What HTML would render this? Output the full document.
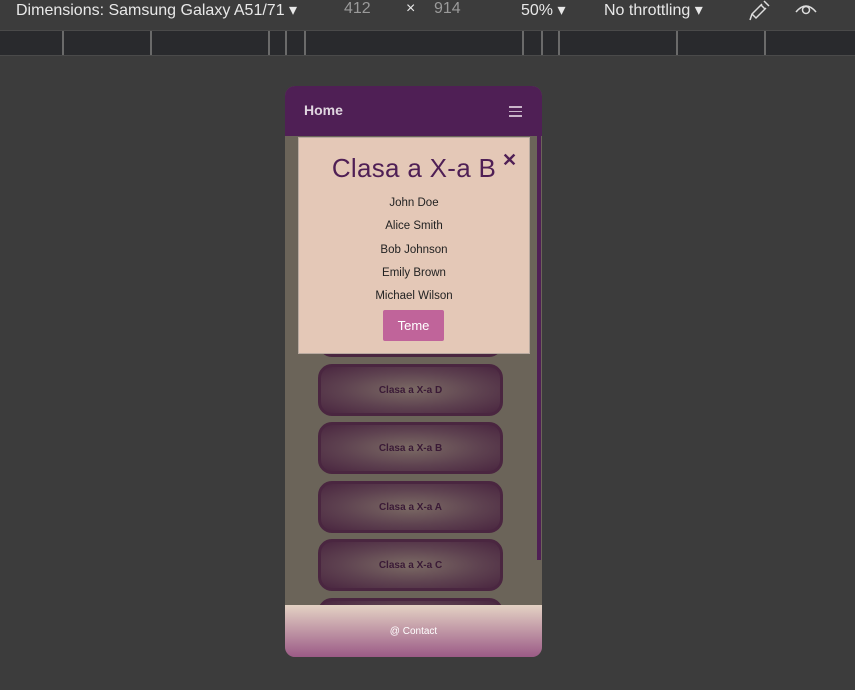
<!DOCTYPE html>
<html><head><style>
*{margin:0;padding:0;box-sizing:border-box}
body{width:855px;height:690px;background:#3c3c3c;font-family:"Liberation Sans",sans-serif;position:relative;overflow:hidden}
.tb{position:absolute;left:0;top:0;width:855px;height:30px;background:#3c3c3c;color:#e8e8e8;font-size:16px}
.tb span{position:absolute;top:0px;white-space:nowrap}
.rul{position:absolute;left:0;top:30px;width:855px;height:26px;background:#292a2d;border-top:1px solid #4a4a4a;border-bottom:1px solid #4a4a4a}
.rul i{position:absolute;top:0;width:2px;height:24px;background:#6a6a6a}
.ph{position:absolute;left:285px;top:86px;width:257px;height:571px;background:#6b6459;border-radius:10px;overflow:hidden}
.hd{position:absolute;left:0;top:0;width:257px;height:50px;background:#4f1f55}
.hd b{position:absolute;left:19px;top:16px;color:#e0d6e0;font-size:14px}
.bur{position:absolute;left:224px;top:20px;width:13px}
.bur i{display:block;height:1.5px;background:#c9b5c9;margin-bottom:3px}
.sb{position:absolute;left:252px;top:50px;width:4px;height:424px;background:#4f1f55}
.card{position:absolute;left:33px;width:185px;height:52px;border-radius:14px;border:3px solid #4a2640;background:radial-gradient(ellipse at center,#7b6a64 0%,#5e4250 55%,#4a2640 100%);text-align:center;line-height:48px;font-size:10px;font-weight:bold;color:#3a1a36}
.ft{position:absolute;left:0;top:519px;width:257px;height:52px;background:linear-gradient(#e4d2c4,#9b5a86);color:#fff;font-size:10px;text-align:center;line-height:54px}
.md{position:absolute;left:298px;top:137px;width:232px;height:217px;background:#e4c8b7;border:1px solid #b9aaa0;text-align:center;color:#222}
.md h1{font-weight:normal;font-size:26px;color:#4f1f55;margin-top:15px;height:32px;letter-spacing:0.3px}
.x{position:absolute;left:203px;top:12px;font-size:18px;font-weight:bold;color:#4f1f55}
.md p{font-size:11.5px;height:23.3px;line-height:23px}
.md p:first-of-type{margin-top:7px}
.btn{position:absolute;left:84px;top:172px;width:61px;height:31px;background:#c0649a;color:#fff;font-size:13px;line-height:31px;border-radius:2px}
</style></head><body>
<div class="tb"><span style="left:16px">Dimensions: Samsung Galaxy A51/71 ▾</span><span style="left:344px;color:#9a9a9a">412</span><span style="left:406px">×</span><span style="left:434px;color:#9a9a9a">914</span><span style="left:521px">50% ▾</span><span style="left:604px">No throttling ▾</span>
<svg style="position:absolute;left:748px;top:0" width="24" height="22"><path d="M2 20 L4 14 L14 4 M16 1 L21 6 M13 5 L17 9 M4 14 L8 18 L18 8" stroke="#ddd" stroke-width="1.5" fill="none"/></svg>
<svg style="position:absolute;left:794px;top:0" width="24" height="18"><path d="M2 12 Q12 0 22 12" stroke="#ddd" stroke-width="1.5" fill="none"/><circle cx="12" cy="10" r="3.5" stroke="#ddd" stroke-width="1.5" fill="none"/></svg></div>
<div class="rul"><i style="left:62px"></i><i style="left:150px"></i><i style="left:268px"></i><i style="left:285px"></i><i style="left:304px"></i><i style="left:522px"></i><i style="left:541px"></i><i style="left:558px"></i><i style="left:676px"></i><i style="left:764px"></i></div>
<div class="ph">
<div class="hd"><b>Home</b><div class="bur"><i></i><i></i><i></i></div></div>
<div class="sb"></div>
<div class="card" style="top:219px"></div>
<div class="card" style="top:278px">Clasa a X-a D</div>
<div class="card" style="top:336px">Clasa a X-a B</div>
<div class="card" style="top:395px">Clasa a X-a A</div>
<div class="card" style="top:453px">Clasa a X-a C</div>
<div class="card" style="top:512px"></div>
<div class="ft">@ Contact</div>
</div>
<div class="md"><h1>Clasa a X-a B</h1><span class="x">✕</span>
<p>John Doe</p><p>Alice Smith</p><p>Bob Johnson</p><p>Emily Brown</p><p>Michael Wilson</p>
<div class="btn">Teme</div></div>
</body></html>
